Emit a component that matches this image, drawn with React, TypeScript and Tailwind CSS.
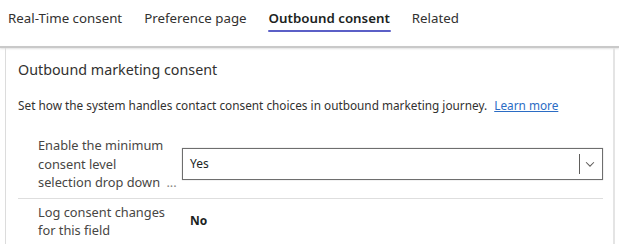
import { useState } from 'react';

const tabs = ['Real-Time consent', 'Preference page', 'Outbound consent', 'Related'];

export default function App() {
    const [active, setActive] = useState('Outbound consent');

    return (
        <div className="w-[619px] h-[244px] overflow-hidden bg-white font-['Noto_Sans',sans-serif] text-[#323130]">
            {/* Tabs */}
            <div className="flex h-[46px] items-start gap-[20px] pl-[7px] pt-[8px]">
                {tabs.map((tab) => (
                    <button
                        key={tab}
                        onClick={() => setActive(tab)}
                        className={`flex flex-col items-stretch text-[13.3px] leading-[20px] ${
                            active === tab ? 'font-semibold text-[#201f1e]' : 'text-[#323130]'
                        }`}
                    >
                        <span className="px-[1px]">{tab}</span>
                        <span className={`mt-[2px] h-[2px] rounded-full ${active === tab ? 'bg-[#5b5fc7]' : 'bg-transparent'}`} />
                    </button>
                ))}
            </div>

            <div className="h-[2px] bg-[#c9c9c9] shadow-[0_1px_2px_rgba(0,0,0,0.12)]" />

            {/* Card */}
            <div className="ml-[5px] mr-[4px] h-[200px] border-l border-r-2 border-l-[#dcdcdc] border-r-[#e4e4e4] pl-[12px] pr-[10px]">
                <h2 className="pt-[12px] text-[14.3px] leading-[20px] text-[#323130]">Outbound marketing consent</h2>

                <p className="mt-[17px] text-[11.8px] leading-[16px] text-[#323130]">
                    Set how the system handles contact consent choices in outbound marketing journey.{' '}
                    <a href="#" className="ml-[4px] text-[#2b6cc4] underline">Learn more</a>
                </p>

                {/* Row 1 */}
                <div className="mt-[23px] flex items-center border-b border-[#dedede] pb-[6px]">
                    <div className="w-[164px] shrink-0 whitespace-nowrap pl-[20px] text-[12.8px] leading-[18.5px] text-[#484644]">
                        <div>Enable the minimum</div>
                        <div>consent level</div>
                        <div>
                            selection drop down <span className="ml-[3px] text-[#8a8886]">...</span>
                        </div>
                    </div>
                    <div className="flex h-[32px] flex-1 items-center border border-[#6e6e6e] pl-[7px] pr-[5px] shadow-[0_0_1px_rgba(0,0,0,0.3)]">
                        <span className="flex-1 text-[12px] text-[#201f1e]">Yes</span>
                        <span className="h-[20px] w-px bg-[#605e5c]" />
                        <svg width="14" height="14" viewBox="0 0 16 16" className="ml-[3px] text-[#605e5c]">
                            <path d="M3.5 6l4.5 4.5L12.5 6" fill="none" stroke="currentColor" strokeWidth="1.2" />
                        </svg>
                    </div>
                </div>

                {/* Row 2 */}
                <div className="flex items-center pt-[4px]">
                    <div className="w-[164px] shrink-0 whitespace-nowrap pl-[20px] text-[12.8px] leading-[18px] text-[#484644]">
                        <div>Log consent changes</div>
                        <div>for this field</div>
                    </div>
                    <span className="pl-[8px] text-[12px] font-bold text-[#201f1e]">No</span>
                </div>
            </div>
        </div>
    );
}
